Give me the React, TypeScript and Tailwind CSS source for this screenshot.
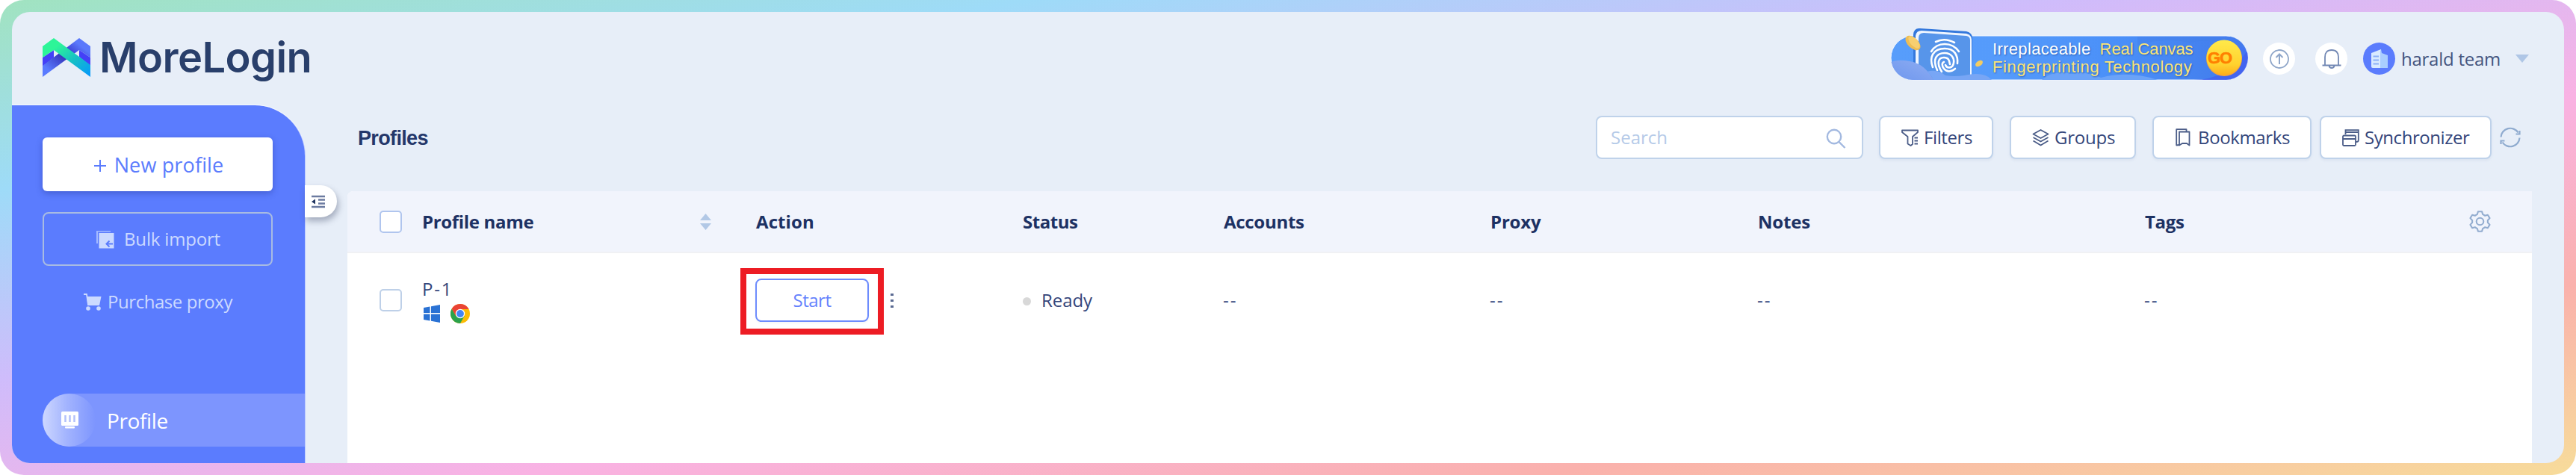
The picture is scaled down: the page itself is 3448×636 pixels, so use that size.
import type { ReactNode } from 'react';

const COLUMNS = [
  { id: 'accounts', title: 'Accounts', width: 'w-[357px]', tracking: 'tracking-[-0.29px]' },
  { id: 'proxy', title: 'Proxy', width: 'w-[358px]', tracking: 'tracking-[-0.18px]' },
  { id: 'notes', title: 'Notes', width: 'w-[518px]', tracking: 'tracking-[-0.2px]' },
  { id: 'tags', title: 'Tags', width: 'w-[434px]', tracking: 'tracking-[-0.32px]' },
];

function Logo() {
  return (
    <svg width="64" height="52" viewBox="0 0 64 52">
      <defs>
        <linearGradient id="logoGreen" x1="0" y1="0" x2="1" y2="1">
          <stop offset="0.25" stopColor="#2df598" />
          <stop offset="0.6" stopColor="#16c1c4" />
          <stop offset="1" stopColor="#0596ff" />
        </linearGradient>
        <linearGradient id="logoBlue" x1="0" y1="1" x2="1" y2="0">
          <stop offset="0.15" stopColor="#5a7bff" />
          <stop offset="0.48" stopColor="#3636bd" />
          <stop offset="0.62" stopColor="#3f45d8" />
          <stop offset="0.8" stopColor="#5a78fb" />
        </linearGradient>
      </defs>
      <path d="M0 26L15 16V26L0 38Z" fill="#4440f7" />
      <path d="M64 26L49 16V25L64 38Z" fill="#4440f7" />
      <path d="M0 52V37L49 0L64 11V26L49 16Z" fill="url(#logoBlue)" />
      <path d="M0 26V11L15 0L64 36V52L15 16Z" fill="url(#logoGreen)" />
    </svg>
  );
}

function PromoBanner() {
  return (
    <div className="relative h-[59px] w-[478px] mb-[2px]">
      <svg className="absolute left-0 top-[-11px]" width="478" height="71" viewBox="0 0 478 71">
        <defs>
          <linearGradient id="pill" x1="0" y1="0" x2="1" y2="0">
            <stop offset="0" stopColor="#579dfb" />
            <stop offset="0.3" stopColor="#559bfb" />
            <stop offset="0.65" stopColor="#4a8ff8" />
            <stop offset="0.9" stopColor="#4480ee" />
            <stop offset="1" stopColor="#4473f3" />
          </linearGradient>
          <linearGradient id="cloud" x1="0" y1="1" x2="1" y2="0">
            <stop offset="0" stopColor="#6e97ee" />
            <stop offset="1" stopColor="#8fadf2" />
          </linearGradient>
          <linearGradient id="coin" x1="0" y1="0" x2="0" y2="1">
            <stop offset="0" stopColor="#ffe94a" />
            <stop offset="0.7" stopColor="#ffd22e" />
            <stop offset="1" stopColor="#ffae1c" />
          </linearGradient>
          <clipPath id="pillClip">
            <rect x="0" y="11" width="478" height="59" rx="29.5" />
          </clipPath>
          <clipPath id="deviceClip">
            <path d="M0 0H478V40H478V70H30L0 50Z" />
          </clipPath>
        </defs>
        <rect x="0" y="11" width="478" height="59" rx="29.5" fill="url(#pill)" stroke="#f1f6ff" strokeWidth="1" />
        <g clipPath="url(#pillClip)">
          <path d="M330 24Q365 12 400 20Q440 12 478 30V12H330Z" fill="#437fea" opacity="0.5" />
          <path d="M405 70Q450 70 478 30V70Z" fill="#4460ee" opacity="0.8" />
        </g>
        <g clipPath="url(#deviceClip)">
          <path d="M30 70V9Q31 0 39 1L101 5Q109 7 109 14L108 70Z" fill="#3478dc" />
          <path d="M33 70V11Q34 4 41 4L101 8Q108 10 108 16V70Z" fill="#eef5ff" />
          <path d="M37 70V14Q37 7 44 7L101 11Q106 12 106 17V70Z" fill="#5795ea" />
        </g>
        <g fill="none" stroke="#fff" strokeWidth="2.6" strokeLinecap="round">
          <path d="M60 19Q72 13 85 20" />
          <path d="M54 32Q60 22 72 22Q84 22 91 32" />
          <path d="M56 53C51 40 56 28 72 28C85 28 90 37 89 48" />
          <path d="M62 57C55 42 61 34 72 34C81 34 85 41 84 47C83 55 75 55 73 50" />
          <path d="M68 59C61 48 63 40 71 40C78 40 78 45 79 49" />
          <path d="M86 55Q77 62 71 55C68 51 68 47 71 46" />
        </g>
        <g clipPath="url(#pillClip)">
          <path d="M0 46Q10 42 25 45Q45 48 57 70H0Z" fill="url(#cloud)" />
          <path d="M48 59Q62 55 73 64Q85 66 98 64Q126 58 136 71H57Q55 64 48 59Z" fill="#78a6f5" />
          <path d="M202 70Q215 57 243 62Q262 58 281 67Q320 57 360 71Z" fill="#6ba3f8" />
        </g>
        <ellipse cx="29.500" cy="20.500" rx="12" ry="7" transform="rotate(43 29.500 20.500)" fill="#edbd55" />
        <ellipse cx="31" cy="19.500" rx="10" ry="5" transform="rotate(48 31 19.500)" fill="#f7cf70" />
        <ellipse cx="118" cy="48" rx="5.500" ry="3.500" transform="rotate(-35 118 48)" fill="#f3cc62" />
        <circle cx="446" cy="41" r="24" fill="#f5a43a" />
        <circle cx="446" cy="40" r="23.500" fill="url(#coin)" />
      </svg>
      <div className="relative flex h-full items-center pl-[136px] pr-[15px]">
        <div className="w-[286px] font-['Liberation_Sans',sans-serif] text-[22px] leading-[23.5px] whitespace-nowrap text-[#fbe478] [text-shadow:1px_1px_2px_#2d62b8]">
          <div>
            <span className="text-white tracking-[0.34px]">Irreplaceable</span>
            <span className="ml-[12px] tracking-[-0.1px]">Real Canvas</span>
          </div>
          <div className="tracking-[0.63px]">Fingerprinting Technology</div>
        </div>
        <span className="w-[48px] pl-[1px] text-center font-['Liberation_Sans',sans-serif] text-[22px] font-bold tracking-[-1px] text-[#ff8000] [-webkit-text-stroke:0.6px_#ff8000]">GO</span>
      </div>
    </div>
  );
}

function FilterIcon() {
  return (
    <svg width="23" height="23" viewBox="0 0 23 23" fill="none" stroke="#4b5d88" strokeWidth="1.8" strokeLinejoin="round">
      <path d="M1 1.500H22V4L15 10V20L12.500 22L8.500 19.500V10L1 4Z" />
      <path d="M17.500 11.500H22M17.500 15.500H22M17.500 19.500H22" />
    </svg>
  );
}

function LayersIcon() {
  return (
    <svg width="23" height="23" viewBox="0 0 23 23" fill="none" stroke="#4b5d88" strokeWidth="1.8" strokeLinejoin="round">
      <path d="M11.500 1L21.500 6.500L11.500 12L1.500 6.500Z" />
      <path d="M1.500 11L11.500 16.500L21.500 11M1.500 15.500L11.500 21.500L21.500 15.500" />
    </svg>
  );
}

function BookmarkIcon() {
  return (
    <svg width="20" height="24" viewBox="0 0 20 24" fill="none" stroke="#4b5d88" strokeWidth="1.8" strokeLinejoin="round">
      <path d="M5 4.500H18.500V22.500L15 20H9L5 22.500Z" />
      <path d="M5 22L1.200 22.500V1.200H14.500V4" />
    </svg>
  );
}

function WindowsStackIcon() {
  return (
    <svg width="23" height="23" viewBox="0 0 23 23" fill="none" stroke="#4b5d88" strokeWidth="1.8">
      <path d="M4.500 7V1.200H21.800V15Q21.800 17 18.500 17" />
      <path d="M4.500 4H21.800" />
      <rect x="1" y="8.500" width="17" height="13.500" rx="1.500" />
      <path d="M1 13H18" strokeWidth="2.2" />
    </svg>
  );
}

function ChromeIcon() {
  return (
    <svg width="26" height="26" viewBox="0 0 26 26">
      <circle cx="13" cy="13" r="13" fill="#fbbc05" />
      <path d="M1.740 6.500A13 13 0 0 0 13 26L18.600 16.200L13 13L7.400 16.200Z" fill="#2ba24c" />
      <path d="M1.740 6.500A13 13 0 0 1 24.500 7H13L7.400 16.200Z" fill="#ea4335" />
      <circle cx="13" cy="13" r="6.200" fill="#fff" />
      <circle cx="13" cy="13" r="4.900" fill="#4285f4" />
    </svg>
  );
}

function ToolButton({ icon, label, className }: { icon: ReactNode; label: string; className: string }) {
  return (
    <button className={`flex h-[58px] items-center rounded-lg border-2 border-[#bfd2ea] bg-white text-[#33457a] shadow-[0_2px_3px_rgba(150,170,200,0.15)] ${className}`}>
      {icon}
      <span className="whitespace-nowrap">{label}</span>
    </button>
  );
}

function Checkbox({ className }: { className: string }) {
  return <span className={`block h-[30px] w-[30px] rounded-[5px] border-2 bg-white ${className}`} />;
}

export default function App() {
  return (
    <div className="h-[636px] w-full bg-white font-['Open_Sans','Noto_Sans',sans-serif] text-[24px] text-[#33457a]">
      <div className="h-full rounded-[32px] bg-[linear-gradient(to_bottom_right,#a1e3c0,#9edbf8_20%,#cfbcfb_40%,#f9b2e3_60%,#fab1ac_80%,#f7dc9a)] p-4">
        <div className="relative flex h-full flex-col overflow-hidden rounded-3xl bg-[#e7eef8]">
          {/* Header */}
          <header className="flex h-[125px] shrink-0 items-center justify-between pl-[41px] pr-[47px]">
            <div className="flex items-center gap-[12px]">
              <div className="pb-[4px]">
                <Logo />
              </div>
              <span className="pb-[3px] font-['Inter',sans-serif] text-[56px] font-semibold leading-none tracking-[-0.6px] text-[#293f6b] [text-shadow:0_0_2px_#fff]">MoreLogin</span>
            </div>

            <div className="flex items-center">
              <PromoBanner />
              <span className="ml-[20px] flex h-[43px] w-[43px] items-center justify-center rounded-full bg-white">
                <svg width="26" height="26" viewBox="0 0 26 26" fill="none" stroke="#8fa6c9" strokeWidth="1.8">
                  <circle cx="13" cy="13" r="12" />
                  <path d="M13 20V7.500M8.500 11L13 6.500L17.500 11" strokeWidth="2" />
                </svg>
              </span>
              <span className="ml-[27px] flex h-[43px] w-[43px] items-center justify-center rounded-full bg-white">
                <svg width="26" height="26" viewBox="0 0 26 26" fill="none" stroke="#7288b4" strokeWidth="1.8">
                  <path d="M4 21V10.500Q4 1 13 1Q22 1 22 10.500V21" />
                  <path d="M0.500 21.500H25.500M9.500 22Q10 25 13 25Q16 25 16.500 22" />
                </svg>
              </span>
              <span className="ml-[21px] flex h-[43px] w-[43px] items-center justify-center rounded-full bg-[#5b7cfd]">
                <svg width="22" height="25" viewBox="0 0 22 25">
                  <path d="M0 5L13 0V25H2Q0 25 0 23Z" fill="#d9eaff" />
                  <path d="M13 0L14 5L22 8V25H12V2Z" fill="#a9ceff" />
                  <path d="M2.500 9.500H10M2.500 14.500H10M2.500 19.500H10" stroke="#8bb0f7" strokeWidth="2" />
                </svg>
              </span>
              <span className="ml-[8px] w-[133px] whitespace-nowrap tracking-[-0.25px] text-[#44557f]">harald team</span>
              <svg className="ml-[20px] mb-[1px]" width="18" height="11" viewBox="0 0 18 11">
                <path d="M0 0H18L9 11Z" fill="#afc6e6" />
              </svg>
            </div>
          </header>

          <div className="flex min-h-0 flex-1">
            {/* Sidebar */}
            <aside className="relative z-10 flex w-[393px] shrink-0 flex-col rounded-tr-[68px] border-r border-white/60 bg-[#5b7cfe] pl-[41px] shadow-[0_-1px_0_#f6f9ff]">
              <button className="mt-[43px] flex h-[72px] w-[308px] items-center justify-center rounded-md bg-white pl-[3px] text-[27px] text-[#5b7cfd] shadow-[0_3px_8px_rgba(40,60,160,0.45)]">
                <svg className="mr-[11px] mt-[4px]" width="16" height="16" viewBox="0 0 16 16" stroke="#5b7cfd" strokeWidth="2">
                  <path d="M0 8H16M8 0V16" />
                </svg>
                <span className="pt-[3px] tracking-[0.15px]">New profile</span>
              </button>
              <button className="mt-[28px] flex h-[72px] w-[308px] items-center justify-center rounded-lg border-2 border-[#a8bbe2] pl-[2px] text-[#ccdaff]">
                <svg className="mr-[13px]" width="24" height="25" viewBox="0 0 24 25">
                  <path d="M0 18V1H19V2.500H2V18Z" fill="#a3b9ff" />
                  <path d="M3.500 4H23.500V24.500H3.500Z" fill="#ccdaff" />
                  <path d="M22 18.500H14M17.500 14.500L13.500 18.500L17.500 22.500" fill="none" stroke="#5b7cfd" strokeWidth="2" />
                </svg>
                <span className="tracking-[-0.18px]">Bulk import</span>
              </button>
              <button className="mt-[32px] flex h-[33px] w-[309px] items-center justify-center text-[#ccdaff]">
                <svg className="mr-[8px]" width="24" height="23" viewBox="0 0 24 23" fill="#ccdaff">
                  <path d="M0 1H4L6 15H21" fill="none" stroke="#ccdaff" strokeWidth="1.800" />
                  <path d="M4 4H23.500L21 16H5.500Z" />
                  <circle cx="6" cy="20" r="2.800" />
                  <circle cx="20" cy="20" r="2.800" />
                </svg>
                <span className="pb-[1px] tracking-[-0.44px]">Purchase proxy</span>
              </button>
              <a className="mt-[106px] flex h-[71px] items-center rounded-l-full bg-[#7d95fe] text-[28px] text-white">
                <span className="flex h-[71px] w-[71px] items-center justify-center rounded-full bg-[linear-gradient(to_right,#cdd7ff,#a3b4fe_45%,#7d95fe)]">
                  <svg className="ml-[1px]" width="23" height="23" viewBox="0 0 23 23">
                    <rect x="0" y="0" width="23" height="19" rx="1.500" fill="#fff" />
                    <path d="M5.500 5V14M11.500 5V14M17.500 5V14" stroke="#b3c1fb" strokeWidth="2.500" />
                    <rect x="5" y="20" width="13" height="2.500" rx="1" fill="#fff" />
                  </svg>
                </span>
                <span className="ml-[15px] tracking-[-0.36px]">Profile</span>
              </a>
              {/* collapse handle hangs over the edge of the sidebar */}
              <span className="absolute right-[-43px] top-[107px] flex h-[43px] w-[43px] items-center rounded-r-full bg-white pl-[9px] shadow-[2px_5px_9px_rgba(60,70,100,0.4)]">
                <svg width="18" height="18" viewBox="0 0 18 18" stroke="#6c7ba0" strokeWidth="2.400">
                  <path d="M0 2H18M9 6.500H18M9 11.500H18M0 16H18" />
                  <path d="M0 9L5 5.500V12.500Z" fill="#20345f" stroke="none" />
                </svg>
              </span>
            </aside>

            {/* Content */}
            <main className="flex min-w-0 flex-1 flex-col pl-[56px] pr-[43px]">
              <div className="mt-[14px] flex h-[58px] items-center justify-between pl-[14px] pr-[15px]">
                <h1 className="pt-[3px] font-['Liberation_Sans',sans-serif] text-[27px] font-bold tracking-[-0.65px] text-[#24376a]">Profiles</h1>
                <div className="flex items-center">
                  <div className="flex h-[58px] w-[358px] items-center justify-between rounded-lg border-2 border-[#bfd2ea] bg-white pl-[18px] pr-[21px] text-[#b5cae8]">
                    <span>Search</span>
                    <svg className="mt-[2px]" width="27" height="27" viewBox="0 0 27 27" fill="none" stroke="#a3b9e0" strokeWidth="2.400">
                      <circle cx="11" cy="11" r="9.200" />
                      <path d="M17 17.500L25.500 26" />
                    </svg>
                  </div>
                  <ToolButton icon={<FilterIcon />} label="Filters" className="ml-[21px] w-[153px] gap-[7px] pl-[28px] tracking-[-0.39px]" />
                  <ToolButton icon={<LayersIcon />} label="Groups" className="ml-[22px] w-[169px] gap-[7px] pl-[28px] tracking-[-0.22px]" />
                  <ToolButton icon={<BookmarkIcon />} label="Bookmarks" className="ml-[22px] w-[213px] gap-[10px] pl-[29px] tracking-[-0.37px]" />
                  <ToolButton icon={<WindowsStackIcon />} label="Synchronizer" className="ml-[11px] w-[230px] gap-[7px] pl-[28px] tracking-[-0.44px]" />
                  <svg className="ml-[11px]" width="28" height="28" viewBox="0 0 28 28" fill="none" stroke="#8fabcf" strokeWidth="2.200">
                    <path d="M1.500 13.500A12.500 12.500 0 0 1 24.500 7.500M26.500 14.500A12.500 12.500 0 0 1 3.500 20.500" />
                    <path d="M21.500 9.500H26.500V5M6.500 18.500H1.500V23" />
                  </svg>
                </div>
              </div>

              <section className="mt-[43px] flex flex-1 flex-col rounded-tl-lg bg-white">
                <div className="flex h-[83px] items-center rounded-tl-lg border-b-2 border-[#f0f1f4] bg-[#f1f4fc] font-bold text-[#1d3163]">
                  <Checkbox className="ml-[43px] border-[#b0c5ee]" />
                  <span className="ml-[27px] w-[372px] tracking-[-0.32px]">Profile name</span>
                  <svg width="15" height="22" viewBox="0 0 15 22" fill="#b2c8e6">
                    <path d="M7.500 0L15 9H0ZM7.500 22L15 13H0Z" />
                  </svg>
                  <span className="ml-[60px] w-[357px] tracking-[0.1px]">Action</span>
                  <span className="w-[269px] tracking-[-0.46px]">Status</span>
                  {COLUMNS.map((col) => (
                    <span key={col.id} className={`${col.width} ${col.tracking}`}>{col.title}</span>
                  ))}
                  <svg width="29" height="29" viewBox="0 0 28 28" fill="none" stroke="#92accf" strokeWidth="2" strokeLinejoin="round">
                    <path d="M11.500 1.200H16.500L17.500 4.800L20.500 6.500L24 5.500L26.600 9.800L24 12.500V15.500L26.600 18.200L24 22.500L20.500 21.500L17.500 23.200L16.500 26.800H11.500L10.500 23.200L7.500 21.500L4 22.500L1.400 18.200L4 15.500V12.500L1.400 9.800L4 5.500L7.500 6.500L10.500 4.800Z" />
                    <circle cx="14" cy="14" r="4.600" />
                  </svg>
                </div>

                <div className="flex h-[126px] items-center">
                  <Checkbox className="ml-[43px] border-[#bed0e8]" />
                  <div className="ml-[27px] w-[426px]">
                    <div className="leading-[32px] tracking-[1.8px]">P-1</div>
                    <div className="flex items-center gap-[14px] pl-[2px] pt-[4px]">
                      <svg width="22" height="24" viewBox="0 0 22 24" fill="#2a72d4">
                        <path d="M0 4L8.500 2.500V11H0ZM10 2.200L22 0V11H10ZM0 12.500H8.500V21.500L0 20ZM10 12.500H22V24L10 21.800Z" />
                      </svg>
                      <ChromeIcon />
                    </div>
                  </div>
                  <div className="mt-[2px] flex w-[192px] items-center justify-center border-8 border-[#ed1c24] px-[13px] pt-[6px] pb-[9px]">
                    <button className="h-[58px] w-[152px] shrink-0 rounded-lg border-2 border-[#6d8cfd] bg-white text-[#6482fd] tracking-[-0.46px] shadow-[0_2px_3px_rgba(0,0,0,0.04)]">Start</button>
                  </div>
                  <div className="ml-[9px] flex w-[177px] flex-col gap-[5px]">
                    <span className="h-[3px] w-[4px] bg-[#5a6a92]" />
                    <span className="h-[3px] w-[4px] bg-[#5a6a92]" />
                    <span className="h-[3px] w-[4px] bg-[#5a6a92]" />
                  </div>
                  <span className="mt-[2px] h-[11px] w-[11px] rounded-full bg-[#d8d8d8]" />
                  <span className="ml-[14px] w-[243px] tracking-[-0.08px]">Ready</span>
                  {COLUMNS.map((col) => (
                    <span key={col.id} className={`${col.width} tracking-[2px]`}>--</span>
                  ))}
                </div>
              </section>
            </main>
          </div>
        </div>
      </div>
    </div>
  );
}
